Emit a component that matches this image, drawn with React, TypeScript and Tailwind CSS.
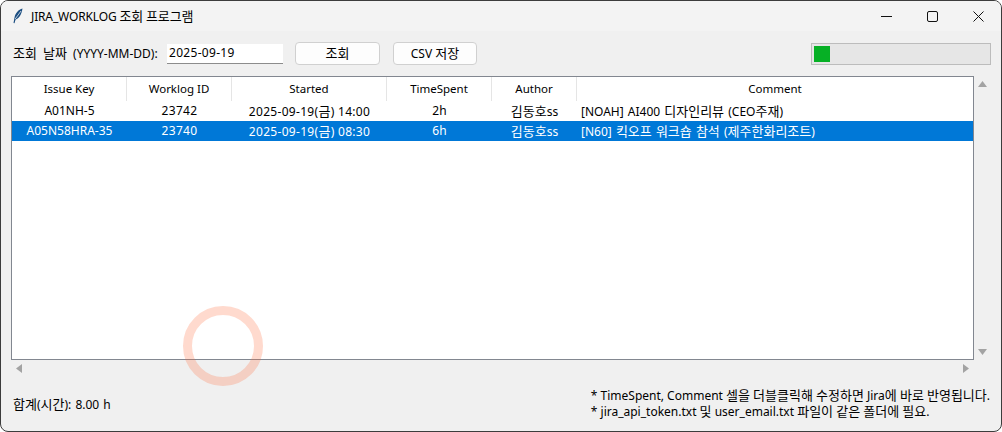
import { Fragment } from "react";

const font = { fontFamily: '"Noto Sans", "Noto Sans CJK KR", sans-serif' };

const columns = [
  { label: "Issue Key", className: "w-[115px]" },
  { label: "Worklog ID", className: "w-[105px]" },
  { label: "Started", className: "w-[155px]" },
  { label: "TimeSpent", className: "w-[105px]" },
  { label: "Author", className: "w-[85px]" },
  { label: "Comment", className: "flex-1" },
];

const rows = [
  ["A01NH-5", "23742", "2025-09-19(금) 14:00", "2h", "김동호ss", "[NOAH] AI400 디자인리뷰 (CEO주재)"],
  ["A05N58HRA-35", "23740", "2025-09-19(금) 08:30", "6h", "김동호ss", "[N60] 킥오프 워크숍 참석 (제주한화리조트)"],
];

// ハングルだけ少し大きく表示する
function Txt({ children }: { children: string }) {
  return (
    <>
      {children.split(/([가-힣]+)/).map((part, i) =>
        i % 2 === 1 ? (
          <span key={i} className="text-[13px]">
            {part}
          </span>
        ) : (
          <Fragment key={i}>{part}</Fragment>
        )
      )}
    </>
  );
}

function Row({ cells, selected }: { cells: string[]; selected?: boolean }) {
  return (
    <div className={`flex h-5 items-center ${selected ? "bg-[#0078d7] text-white" : "bg-white text-black"}`}>
      {cells.map((cell, i) => (
        <div
          key={i}
          className={`${columns[i].className} truncate ${
            i === 5 ? "pl-[4px] text-left [word-spacing:1px]" : "text-center"
          } ${i === 1 || i === 2 ? "tracking-[0.3px]" : ""}`}
        >
          <Txt>{cell}</Txt>
        </div>
      ))}
    </div>
  );
}

export default function App() {
  return (
    <div
      className="relative flex h-[432px] w-[1002px] flex-col overflow-hidden rounded-[8px] border border-[#3c3c3c] bg-[#f0f0f0] text-[12px] leading-[16px] text-black"
      style={font}
    >
      {/* タイトルバー */}
      <div className="flex h-[30px] shrink-0 items-center bg-[#f3f3f3]">
        <svg className="ml-[11px] h-[16px] w-[12px]" viewBox="0 0 12 16">
          <path d="M10.5 0.5C6.5 1.5 3.5 5 2.5 9.5L1.5 15L2.5 15.2L3.6 11.5C7 10.5 9.5 7 10.5 0.5Z" fill="#1d4f82" />
          <path d="M9 3L3.2 11" stroke="#ffffff" strokeWidth="0.7" />
        </svg>
        <span className="ml-[7px] tracking-[-0.15px]"><Txt>JIRA_WORKLOG 조회 프로그램</Txt></span>
        <div className="ml-auto flex items-center">
          <svg className="mr-[35px] h-[10px] w-[11px]" viewBox="0 0 11 10">
            <path d="M0 5.5H11" stroke="#111" strokeWidth="1" />
          </svg>
          <svg className="mr-[35px] h-[11px] w-[11px]" viewBox="0 0 11 11">
            <rect x="0.5" y="0.5" width="10" height="10" rx="1.5" fill="none" stroke="#111" />
          </svg>
          <svg className="mr-[17px] h-[11px] w-[11px]" viewBox="0 0 11 11">
            <path d="M0.5 0.5L10.5 10.5M10.5 0.5L0.5 10.5" stroke="#111" strokeWidth="1" />
          </svg>
        </div>
      </div>

      {/* ツールバー */}
      <div className="flex h-[45px] shrink-0 items-center pl-[12px] pr-[10px]">
        <span className="w-[154px] whitespace-nowrap [word-spacing:3px]"><Txt>조회 날짜 (YYYY-MM-DD):</Txt></span>
        <div className="flex h-[20px] w-[116px] items-center border-b border-[#8c8c8c] bg-white pl-[2px] tracking-[0.3px]">2025-09-19</div>
        <button className="ml-[12px] h-[23px] w-[85px] rounded-[4px] border border-[#d0d0d0] bg-[#fdfdfd]"><Txt>조회</Txt></button>
        <button className="ml-[13px] h-[23px] w-[84px] rounded-[4px] border border-[#d0d0d0] bg-[#fdfdfd]"><Txt>CSV 저장</Txt></button>
        <div className="ml-auto h-[22px] w-[180px] border border-[#bcbcbc] bg-[#e6e6e6] p-[2px]">
          <div className="h-full w-[16px] bg-[#06b025]" />
        </div>
      </div>

      {/* テーブル */}
      <div className="flex shrink-0 pl-[10px]">
        <div className="h-[284px] w-[963px] border border-[#828790] bg-white">
          <div className="flex h-[24px] items-center text-[11.5px]">
            {columns.map((col, i) => (
              <div
                key={col.label}
                className={`${col.className} flex h-full items-center justify-center ${i < 5 ? "border-r border-[#e5e5e5]" : ""}`}
              >
                {col.label}
              </div>
            ))}
          </div>
          {rows.map((cells, i) => (
            <Row key={i} cells={cells} selected={i === 1} />
          ))}
        </div>
        <div className="flex h-[284px] w-[17px] flex-col items-center justify-between py-[4px]">
          <svg className="mt-[1px] h-[6px] w-[9px]" viewBox="0 0 9 6"><path d="M4.5 0L9 6H0Z" fill="#a3a3a3" /></svg>
          <svg className="mb-[1px] h-[6px] w-[9px]" viewBox="0 0 9 6"><path d="M0 0H9L4.5 6Z" fill="#a3a3a3" /></svg>
        </div>
      </div>
      <div className="ml-[10px] flex h-[17px] w-[963px] shrink-0 items-center justify-between pl-[5px] pr-[5px]">
        <svg className="h-[9px] w-[6px]" viewBox="0 0 6 9"><path d="M6 0V9L0 4.5Z" fill="#a3a3a3" /></svg>
        <svg className="h-[9px] w-[6px]" viewBox="0 0 6 9"><path d="M0 0V9L6 4.5Z" fill="#a3a3a3" /></svg>
      </div>

      {/* フッター */}
      <div className="flex flex-1 items-center justify-between pl-[12px] pr-[11px]">
        <span className="[word-spacing:1px]"><Txt>합계(시간): 8.00 h</Txt></span>
        <div className="mb-[2px] flex flex-col gap-[1px]">
          <div className="leading-[14px]"><Txt>* TimeSpent, Comment 셀을 더블클릭해 수정하면 Jira에 바로 반영됩니다.</Txt></div>
          <div className="leading-[14px]"><Txt>* jira_api_token.txt 및 user_email.txt 파일이 같은 폴더에 필요.</Txt></div>
        </div>
      </div>

      {/* カーソルのハイライト */}
      <div className="pointer-events-none absolute left-[182px] top-[305px] h-[80px] w-[80px] rounded-full border-[9px] border-[#ff6a3c]/25" />
    </div>
  );
}
